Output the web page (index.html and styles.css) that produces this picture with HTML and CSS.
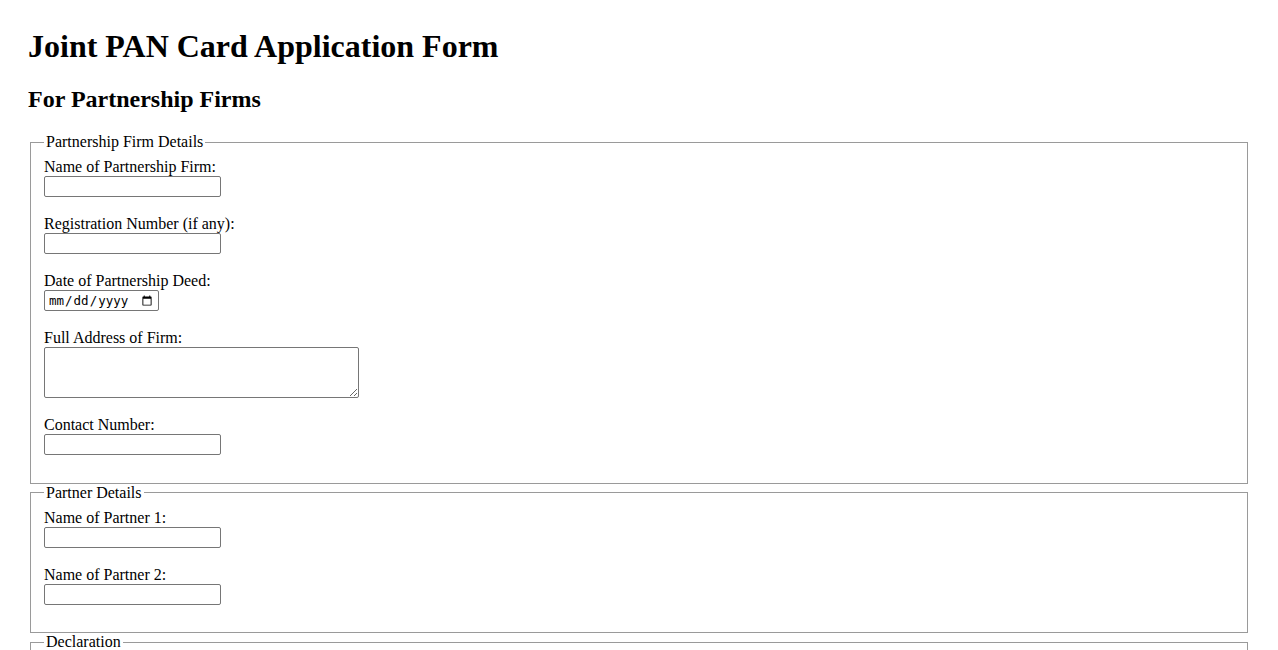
FILE: index.html
```html
<!DOCTYPE html>
<html lang="en">
<head>
<meta charset="UTF-8">
<title>Joint PAN Card Application Form</title>
<link rel="stylesheet" href="styles.css">
</head>
<body>
<h1>Joint PAN Card Application Form</h1>
<h2>For Partnership Firms</h2>

<form>
  <fieldset>
    <legend>Partnership Firm Details</legend>
    <label for="firm-name">Name of Partnership Firm:</label><br>
    <input type="text" id="firm-name" class="field"><br><br>

    <label for="reg-no">Registration Number (if any):</label><br>
    <input type="text" id="reg-no" class="field"><br><br>

    <label for="deed-date">Date of Partnership Deed:</label><br>
    <input type="date" id="deed-date" class="date-field"><br><br>

    <label for="address">Full Address of Firm:</label><br>
    <textarea id="address" class="address-field"></textarea><br><br>

    <label for="contact">Contact Number:</label><br>
    <input type="tel" id="contact" class="field"><br><br>
  </fieldset>

  <fieldset>
    <legend>Partner Details</legend>
    <label for="partner1">Name of Partner 1:</label><br>
    <input type="text" id="partner1" class="field"><br><br>

    <label for="partner2">Name of Partner 2:</label><br>
    <input type="text" id="partner2" class="field"><br><br>
  </fieldset>

  <fieldset>
    <legend>Declaration</legend>
    <input type="checkbox" id="agree">
    <label for="agree">I hereby declare that the information given above is true and correct.</label><br><br>
  </fieldset>

  <button type="submit">Submit</button>
</form>
</body>
</html>
```

FILE: styles.css
```css
body {
  margin: 28px;
  font-family: "Liberation Serif", "Times New Roman", serif;
  color: #000;
  background: #fff;
}
h1 {
  margin-top: 0;
}
fieldset {
  margin: 0 2px;
  border: 1px solid #9a9a9a;
  padding: 7px 13px 9.5px;
}
legend {
  padding: 0 2px;
}
.field,
.date-field,
.address-field {
  box-sizing: border-box;
  border: 1px solid #767676;
  border-radius: 2px;
  font-size: 13px;
  margin: 0;
}
.field {
  width: 177px;
  height: 21px;
  padding: 1px 2px;
}
.date-field {
  width: 115px;
  height: 21px;
  padding: 1px 3px;
  font-family: "DejaVu Sans Mono", "Liberation Mono", monospace;
  font-size: 12.5px;
}
.address-field {
  width: 315px;
  height: 51px;
  padding: 2px;
  vertical-align: bottom;
}
```
